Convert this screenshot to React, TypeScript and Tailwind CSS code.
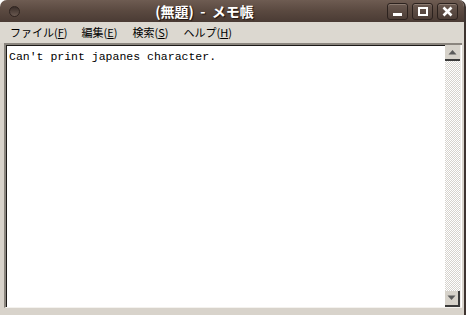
export default function App() {
  const menus = [
    { label: "ファイル", key: "F", cls: "ml-[10px]" },
    { label: "編集", key: "E", cls: "ml-[14px]" },
    { label: "検索", key: "S", cls: "ml-[15px]" },
    { label: "ヘルプ", key: "H", cls: "ml-[15px]" },
  ];

  return (
    <div className="w-[466px] h-[315px] bg-white overflow-hidden">
      <div className="w-full h-full flex flex-col rounded-t-[7px] overflow-hidden bg-[#d8d3cb] border-r-2 border-[#3e3430]">

        {/* TITLE BAR */}
        <div className="relative h-[22px] flex items-center bg-gradient-to-b from-[#6e5c52] via-[#5a4940] to-[#4a3b34] shrink-0">
          <div className="ml-[9px] w-[11px] h-[11px] rounded-full bg-gradient-to-b from-[#3a2e29] to-[#6a5950] border border-[#2f2420]" />
          <div
            className="flex-1 text-center text-white font-bold text-[14px] pl-[2px] whitespace-pre [text-shadow:1px_1px_1px_#20140f]"
            style={{ fontFamily: '"Noto Sans CJK JP", "DejaVu Sans", sans-serif' }}
          >
            (無題)  -  メモ帳
          </div>
          <div className="flex gap-[4px] mr-[6px]">
            <WinButton>
              <div className="w-[9px] h-[3px] bg-white mt-[6px]" />
            </WinButton>
            <WinButton>
              <div className="w-[10px] h-[9px] border-2 border-white" />
            </WinButton>
            <WinButton>
              <svg width="11" height="11" viewBox="0 0 11 11">
                <path d="M1.5 1.5 L9.5 9.5 M9.5 1.5 L1.5 9.5" stroke="white" strokeWidth="2.6" />
              </svg>
            </WinButton>
          </div>
        </div>

        {/* MENU BAR */}
        <div
          className="h-[21px] flex items-center text-[11px] text-black shrink-0 bg-[#dcd8d0]"
          style={{ fontFamily: '"Noto Sans CJK JP", "DejaVu Sans", sans-serif' }}
        >
          {menus.map((m) => (
            <span key={m.key} className={m.cls}>
              {m.label}(<span className="underline">{m.key}</span>)
            </span>
          ))}
        </div>

        {/* EDIT AREA */}
        <div className="flex-1 flex ml-[4px] mr-[2px] mb-[7px] border-l-2 border-t-2 border-[#8a857e] border-b border-b-[#f4f2ee] bg-white min-h-0">
          <div className="flex-1 border-l border-t border-[#1c1a18] pl-[2px] pt-[3px]">
            <div
              className="text-[11.5px] text-black leading-[15px]"
              style={{ fontFamily: '"Liberation Mono", monospace' }}
            >
              Can't print japanes character.
            </div>
          </div>

          {/* SCROLLBAR */}
          <div className="w-[16px] flex flex-col mr-[1px] border-r border-[#efece8]">
            <div className="h-[16px] bg-[#d6d2ca] flex items-center justify-center border-b-2 border-[#3a3a3a]">
              <svg width="9" height="6" viewBox="0 0 9 6">
                <path d="M0.5 5.5 L4.5 1 L8.5 5.5 Z" fill="#5a5a5a" />
              </svg>
            </div>
            <div className="flex-1 bg-[length:2px_2px] bg-[repeating-conic-gradient(#d6d3ce_0_25%,#ffffff_0_50%)]" />
            <div className="h-[16px] bg-[#d6d2ca] flex items-center justify-center border-r-2 border-b-2 border-[#3a3a3a]">
              <svg width="9" height="6" viewBox="0 0 9 6">
                <path d="M0.5 0.5 L4.5 5 L8.5 0.5 Z" fill="#5a5a5a" />
              </svg>
            </div>
          </div>
        </div>
      </div>
    </div>
  );
}

function WinButton({ children }: { children: React.ReactNode }) {
  return (
    <div className="w-[21px] h-[17px] rounded-[3px] border border-[#2c221e] bg-gradient-to-b from-[#6a5950] to-[#4d3e37] shadow-[inset_0_1px_0_#8a7a70] flex items-center justify-center">
      {children}
    </div>
  );
}
